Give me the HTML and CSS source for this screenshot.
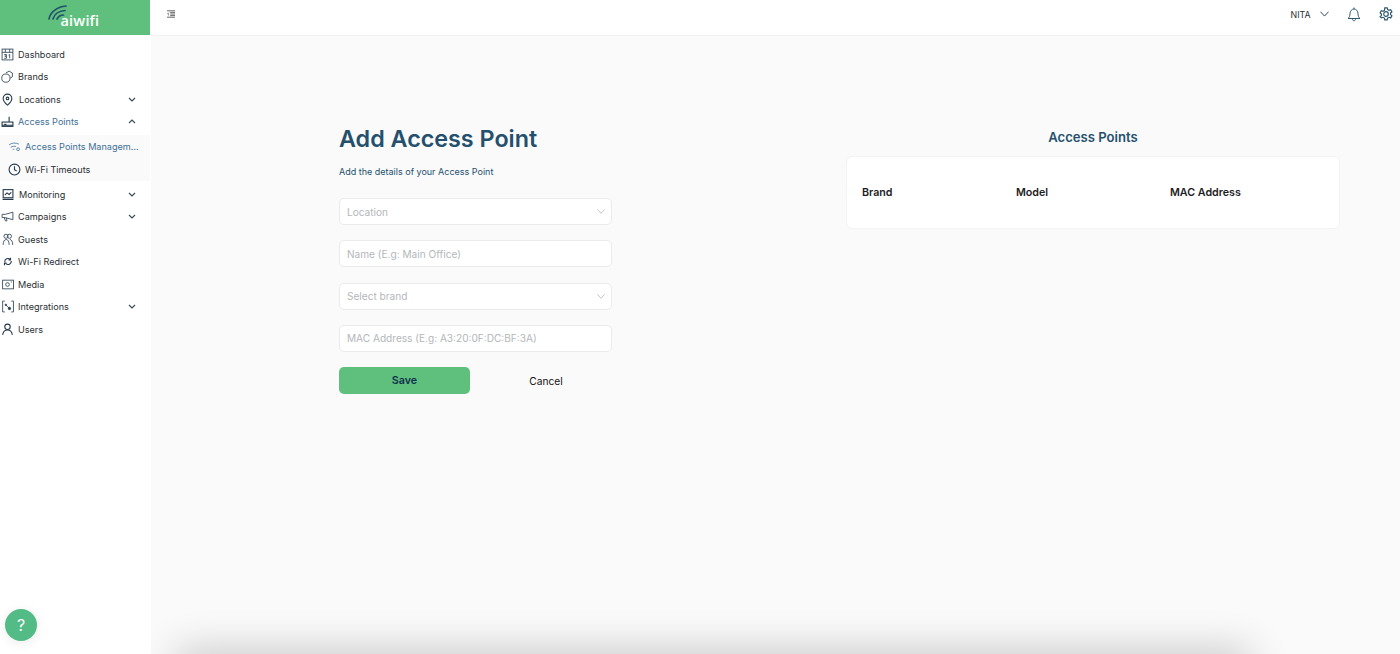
FILE: index.html
```html
<!DOCTYPE html>
<html lang="en">
<head>
<meta charset="utf-8">
<title>Add Access Point</title>
<link rel="stylesheet" href="styles.css">
</head>
<body>
<div class="app">
  <aside class="sidebar">
    <div class="logo">
      <svg class="logo-arcs" viewBox="0 0 20 20" width="20" height="20" fill="none" stroke="#24506e" stroke-width="1.700" stroke-linecap="round"><path d="M1 14C2 8 8 2 18 1"/><path d="M5 14C6 10 10 6 17 5.500"/><path d="M9 14C10 12 12 10 15.500 10"/></svg>
      <span class="logo-text">aiwifi</span>
    </div>
    <nav class="nav">
      <a class="item"><svg class="ic" viewBox="0 0 12 12"><rect x="1" y="1" width="10" height="10"/><path d="M1 4h10M4 1v3M8 1v3M3 6h2v1.500H3.500 5V9.500H3M7 6.500 8 6v3.500"/></svg><span class="label">Dashboard</span></a>
      <a class="item"><svg class="ic" viewBox="0 0 12 12"><circle cx="4.500" cy="7.500" r="3.800"/><path d="M4.500 2.800 7.500 1l3 1.800v3.500L8.500 7.500"/></svg><span class="label">Brands</span></a>
      <a class="item"><svg class="ic ic-strong" viewBox="0 0 12 12"><path d="M6 11.200C3.500 9 2 7 2 5a4 4 0 0 1 8 0c0 2-1.500 4-4 6.200Z"/><circle cx="6" cy="5" r="1.200"/></svg><span class="label nudge">Locations</span><svg class="chev" viewBox="0 0 8 5"><path d="M1 1l3 3 3-3"/></svg></a>
      <a class="item active"><svg class="ic ic-strong" viewBox="0 0 12 12"><rect x="1" y="6.500" width="10" height="4"/><path d="M7.500 6.500V1.500M3 8.500h2M1 9.500h10"/></svg><span class="label">Access Points</span><svg class="chev" viewBox="0 0 8 5"><path d="M1 4l3-3 3 3"/></svg></a>
      <div class="sub">
        <a class="sub-item active"><svg class="ic" viewBox="0 0 12 12"><path d="M1 4.500C3.500 2.500 7 2.300 10 3.800M2.500 6.800C4 5.700 6 5.500 7.500 6M4.300 9C4.800 8.500 5.500 8.400 6 8.500"/><circle cx="9.300" cy="8.500" r="1.300"/></svg><span class="sub-label">Access Points Managem…</span></a>
        <a class="sub-item"><svg class="ic ic-strong" viewBox="0 0 12 12"><circle cx="6" cy="6" r="5"/><path d="M6 3v3.200l2 1.200"/></svg><span class="sub-label">Wi-Fi Timeouts</span></a>
      </div>
      <a class="item after-sub"><svg class="ic ic-strong" viewBox="0 0 12 12"><rect x="2" y="1.500" width="9" height="7.500"/><path d="M1.500 10.500h10M3.500 6.500l2-2 2 1.500 2-2"/></svg><span class="label nudge">Monitoring</span><svg class="chev" viewBox="0 0 8 5"><path d="M1 1l3 3 3-3"/></svg></a>
      <a class="item"><svg class="ic" viewBox="0 0 12 12"><path d="M11 2 4 4H1v3h3l7 2ZM3 7l1 3h1.500L5 7.300"/></svg><span class="label">Campaigns</span><svg class="chev" viewBox="0 0 8 5"><path d="M1 1l3 3 3-3"/></svg></a>
      <a class="item"><svg class="ic" viewBox="0 0 12 12"><circle cx="4.600" cy="3" r="1.900"/><circle cx="7.800" cy="3" r="1.900"/><path d="M2 11c0-3 1-5 2.800-5S7.500 8 7.500 11M8.200 6c1.600 0 2.600 2 2.600 5"/></svg><span class="label">Guests</span></a>
      <a class="item"><svg class="ic ic-strong" viewBox="0 0 12 12"><path d="M3.500 6.500a3 3 0 0 1 5-2.500M9.500 5.500a3 3 0 0 1-5 2.500M8.800 2.500v2H7M3.200 9.500v-2H5"/></svg><span class="label">Wi-Fi Redirect</span></a>
      <a class="item"><svg class="ic" viewBox="0 0 12 12"><rect x="1.500" y="2" width="10" height="8"/><circle cx="6" cy="6" r="1.700"/><path d="M9 3.700h1"/></svg><span class="label">Media</span></a>
      <a class="item"><svg class="ic" viewBox="0 0 12 12"><path d="M3.500 1h-2v10h2M9.500 1h2v10h-2M4.500 4.500l3 3"/><circle cx="7.800" cy="7.800" r="1.100" class="dot"/><circle cx="4.500" cy="4.500" r=".7" class="dot"/></svg><span class="label">Integrations</span><svg class="chev" viewBox="0 0 8 5"><path d="M1 1l3 3 3-3"/></svg></a>
      <a class="item"><svg class="ic ic-strong" viewBox="0 0 12 12"><circle cx="6" cy="3.500" r="2.500"/><path d="M1.500 11C2 8 3.700 6.500 6 6.500S10 8 10.500 11"/></svg><span class="label">Users</span></a>
    </nav>
    <div class="help">?</div>
  </aside>
  <div class="content">
    <header class="topbar">
      <svg class="menu-ic" viewBox="0 0 10 9" width="8" height="8"><path d="M0 .5h10M4 2.500h6M4 4.500h6M4 6.500h6M0 8.500h10M2.500 2.800.8 4.500l1.700 1.700"/></svg>
      <div class="top-right">
        <span class="user">NITA</span>
        <svg class="user-chev" viewBox="0 0 10 6" width="9" height="6"><path d="M.5.500 5 5.300 9.500.500"/></svg>
        <svg class="top-ic bell" viewBox="0 0 14 15" width="14" height="15"><path d="M1 11.500c1.500-1 1.800-2.500 2-5 .2-2.500 1.800-4.500 4-4.500s3.800 2 4 4.500c.2 2.500.5 4 2 5ZM5.500 11.800c0 2.600 3 2.600 3 0M7 .5V2"/></svg>
        <svg class="top-ic gear" viewBox="0 0 14 14" width="14" height="14"><path d="M5.800.8h2.400l.4 1.800 1.400.7 1.700-.6 1.200 2.100-1.300 1.200v1.600l1.300 1.200-1.200 2.100-1.700-.6-1.400.8-.4 1.700H5.800l-.4-1.700-1.400-.8-1.700.6L1.100 9.800l1.300-1.200V7L1.100 5.800l1.200-2.100 1.700.6 1.400-.7Z"/><circle cx="7" cy="7" r="2.300"/></svg>
      </div>
    </header>
    <main class="main">
      <section class="form-col">
        <h1 class="title">Add Access Point</h1>
        <p class="subtitle">Add the details of your Access Point</p>
        <div class="field select"><span>Location</span><svg viewBox="0 0 8 5" width="8" height="5"><path d="M.5.500 4 4.300 7.500.500"/></svg></div>
        <div class="field"><span>Name (E.g: Main Office)</span></div>
        <div class="field select"><span>Select brand</span><svg viewBox="0 0 8 5" width="8" height="5"><path d="M.5.500 4 4.300 7.500.500"/></svg></div>
        <div class="field"><span>MAC Address (E.g: A3:20:0F:DC:BF:3A)</span></div>
        <div class="actions">
          <button class="save" type="button">Save</button>
          <button class="cancel" type="button">Cancel</button>
        </div>
      </section>
      <section class="list-col">
        <h2 class="list-title">Access Points</h2>
        <div class="card">
          <div class="cell">Brand</div>
          <div class="cell">Model</div>
          <div class="cell">MAC Address</div>
        </div>
      </section>
      <div class="bottom-shadow"></div>
    </main>
  </div>
</div>
</body>
</html>
```

FILE: styles.css
```css
* { box-sizing: border-box; }
html, body { margin: 0; height: 100%; overflow: hidden; }
body { font-family: Inter, "Liberation Sans", sans-serif; color: #1f2328; background: #fafafa; }
.app { display: flex; height: 654px; }

.sidebar { position: relative; width: 151px; flex: none; background: #fff; }
.logo { position: relative; height: 35px; width: 150px; background: #5fc07e; }
.logo-arcs { position: absolute; left: 48px; top: 5px; }
.logo-text { position: absolute; left: 60.500px; top: 10.500px; font-family: "Open Sans", sans-serif; font-size: 14.500px; font-weight: 600; line-height: 20px; color: #fff; letter-spacing: .2px; }

.nav { padding-top: 8px; display: flex; flex-direction: column; }
.item { display: flex; align-items: center; height: 22.500px; padding-left: 1px; padding-right: 15px; font-size: 9.100px; color: #2b2f33; }
.item.active { color: #3e7096; }
.item.after-sub { margin-top: 2px; }
.ic { width: 13px; height: 13px; flex: none; fill: none; stroke: #33475a; stroke-width: .8; }
.ic-strong { stroke-width: 1; stroke: #24384a; }
.ic .dot { fill: #24384a; }
.label { margin-left: 4px; flex: 1; white-space: nowrap; }
.label.nudge { margin-left: 5px; }
.chev { width: 8px; height: 5px; flex: none; fill: none; stroke: #33475a; stroke-width: 1.100; }

.sub { background: #fafafa; width: 150px; margin-top: 1.500px; }
.sub-item { display: flex; align-items: center; height: 22.500px; padding-left: 8px; font-size: 9.100px; color: #2b2f33; }
.sub-item.active { color: #3e7096; height: 24px; }
.sub-item.active .ic { stroke: #4a7a9c; }
.sub-label { margin-left: 4px; white-space: nowrap; }

.help { position: absolute; left: 5px; top: 609px; width: 32px; height: 32px; border-radius: 50%; background: #53bb85; color: #fff; font-size: 16px; line-height: 32px; text-align: center; box-shadow: 0 2px 12px rgba(0,0,0,.08); }

.content { flex: 1; display: flex; flex-direction: column; min-width: 0; }
.topbar { height: 36px; flex: none; display: flex; align-items: center; justify-content: space-between; background: #fff; border-bottom: 1px solid #f1f1f1; padding: 0 7px 7px 16px; }
.menu-ic { fill: none; stroke: #555; stroke-width: 1.100; }
.top-right { display: flex; align-items: center; }
.user { font-size: 8.800px; color: #2b2f33; }
.user-chev { margin-left: 9.500px; fill: none; stroke: #33475a; stroke-width: 1.100; }
.top-ic { fill: none; stroke: #2f5873; stroke-width: 1; }
.gear { stroke-width: 1.200; }
.bell { margin-left: 18px; margin-right: 18px; }

.main { position: relative; flex: 1; display: flex; align-items: flex-start; padding: 87px 60px 0 188px; gap: 234.500px; overflow: hidden; background: #fafafa; }
.form-col { width: 272.500px; flex: none; }
.title { margin: 0; font-size: 23.300px; line-height: 32px; font-weight: 600; color: #24506e; }
.subtitle { margin: 10px 0 19px; font-size: 9px; line-height: 14px; color: #24506e; }
.field { display: flex; align-items: center; justify-content: space-between; height: 27px; margin-bottom: 15.250px; padding: 0 6px 0 7px; background: #fff; border: 1px solid #ebebeb; border-radius: 5px; font-size: 10.100px; color: #b4b7ba; }
.field svg { fill: none; stroke: #b9bcbf; stroke-width: .9; }
.actions { display: flex; align-items: center; margin-top: 15px; }
.save { flex: none; width: 131px; height: 27px; border: 0; border-radius: 5px; background: #5fc07e; color: #12304a; font: 600 10.700px Inter, sans-serif; }
.cancel { flex: none; width: 152px; height: 27px; border: 0; background: none; color: #111; font: 400 10.200px Inter, sans-serif; }

.list-col { width: 494px; flex: none; margin-top: 3px; }
.list-title { margin: 0 0 7px; text-align: center; font-size: 13.100px; line-height: 23px; font-weight: 600; color: #24506e; }
.card { display: grid; grid-template-columns: repeat(3, 1fr); align-items: center; height: 73px; padding: 0 15px; background: #fff; border: 1px solid #f3f3f3; border-radius: 6px; }
.cell { font-size: 10.700px; font-weight: 600; color: #1d1d1f; }

.bottom-shadow { position: absolute; left: 25px; right: 150px; bottom: -30px; height: 30px; box-shadow: 0 -2px 40px rgba(0,0,0,.24); }
```
